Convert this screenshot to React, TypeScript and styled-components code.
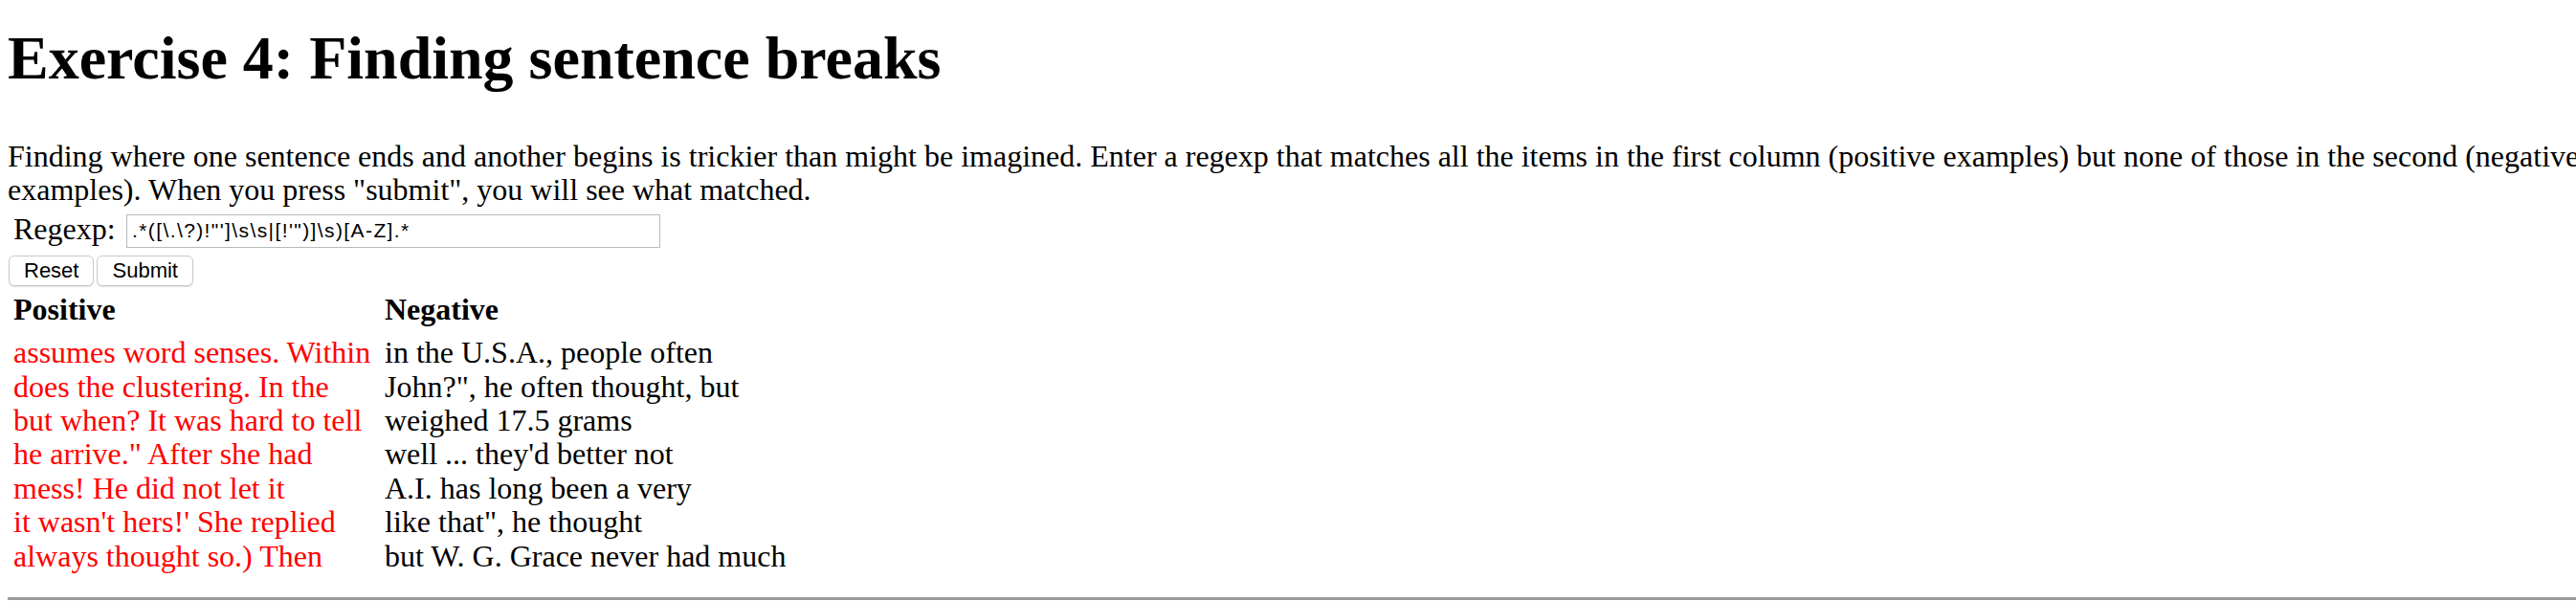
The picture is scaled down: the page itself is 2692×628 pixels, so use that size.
import styled, { createGlobalStyle } from "styled-components";

const GlobalStyle = createGlobalStyle`
  html, body {
    margin: 0;
    padding: 0;
    background: #fff;
    overflow: hidden;
  }
  body {
    font-family: "Liberation Serif", "Times New Roman", serif;
    font-size: 32px;
    line-height: 1.107;
    color: #000;
  }
`;

const Page = styled.div`
  padding-left: 8px;
  width: 2684px;
`;

const Title = styled.h1`
  font-size: 64px;
  font-weight: bold;
  line-height: 1.107;
  margin: 26px 0 0;
`;

const Intro = styled.p`
  margin: 49px 0 0;
  white-space: nowrap;
`;

const RegexpRow = styled.div`
  display: flex;
  align-items: flex-start;
  margin-top: 5px;
  padding-left: 6px;
`;

const Label = styled.label`
  width: 118px;
  flex: none;
`;

const RegexpInput = styled.input`
  box-sizing: border-box;
  width: 558px;
  height: 35px;
  margin: 2px 0 0;
  padding: 0 5px;
  border: 1px solid #b9b9b9;
  border-radius: 0;
  background: #fff;
  font-family: "Liberation Sans", Arial, sans-serif;
  font-size: 21px;
  letter-spacing: 1.4px;
  color: #000;
  outline: none;
`;

const ButtonRow = styled.div`
  display: flex;
  gap: 3px;
  margin-top: 8px;
  padding-left: 1px;
`;

const Button = styled.button`
  height: 32px;
  padding: 0 15px;
  border: 1px solid #c9c9c9;
  border-radius: 6px;
  background: #fff;
  box-shadow: 0 1px 1px rgba(0, 0, 0, 0.12);
  font-family: "Liberation Sans", Arial, sans-serif;
  font-size: 22px;
  line-height: 1;
  color: #000;
`;

const Examples = styled.div`
  display: grid;
  grid-template-columns: 380px auto;
  column-gap: 8px;
  row-gap: 10px;
  margin-top: 7px;
  padding-left: 6px;
`;

const ColumnHead = styled.div`
  font-weight: bold;
`;

const Column = styled.div<{ $positive?: boolean }>`
  color: ${({ $positive }) => ($positive ? "#ff0000" : "#000")};
  white-space: nowrap;
`;

const Rule = styled.hr`
  margin: 25px 0 0;
  border: none;
  border-top: 3px solid #9b9b9b;
  height: 0;
`;

const positives = [
  "assumes word senses. Within",
  "does the clustering. In the",
  "but when? It was hard to tell",
  'he arrive." After she had',
  "mess! He did not let it",
  "it wasn't hers!' She replied",
  "always thought so.) Then",
];

const negatives = [
  "in the U.S.A., people often",
  'John?", he often thought, but',
  "weighed 17.5 grams",
  "well ... they'd better not",
  "A.I. has long been a very",
  'like that", he thought',
  "but W. G. Grace never had much",
];

const pattern = String.raw`.*([\.\?)!"']\s\s|[!'")]\s)[A-Z].*`;

export default function App() {
  return (
    <Page>
      <GlobalStyle />
      <Title>Exercise 4: Finding sentence breaks</Title>
      <Intro>
        Finding where one sentence ends and another begins is trickier than might be
        imagined. Enter a regexp that matches all the items in the first column
        (positive examples) but none of those in the second (negative
        <br />
        examples). When you press "submit", you will see what matched.
      </Intro>
      <RegexpRow>
        <Label htmlFor="regexp">Regexp:</Label>
        <RegexpInput id="regexp" value={pattern} readOnly />
      </RegexpRow>
      <ButtonRow>
        <Button type="button">Reset</Button>
        <Button type="button">Submit</Button>
      </ButtonRow>
      <Examples>
        <ColumnHead>Positive</ColumnHead>
        <ColumnHead>Negative</ColumnHead>
        <Column $positive>
          {positives.map((line) => (
            <div key={line}>{line}</div>
          ))}
        </Column>
        <Column>
          {negatives.map((line) => (
            <div key={line}>{line}</div>
          ))}
        </Column>
      </Examples>
      <Rule />
    </Page>
  );
}
